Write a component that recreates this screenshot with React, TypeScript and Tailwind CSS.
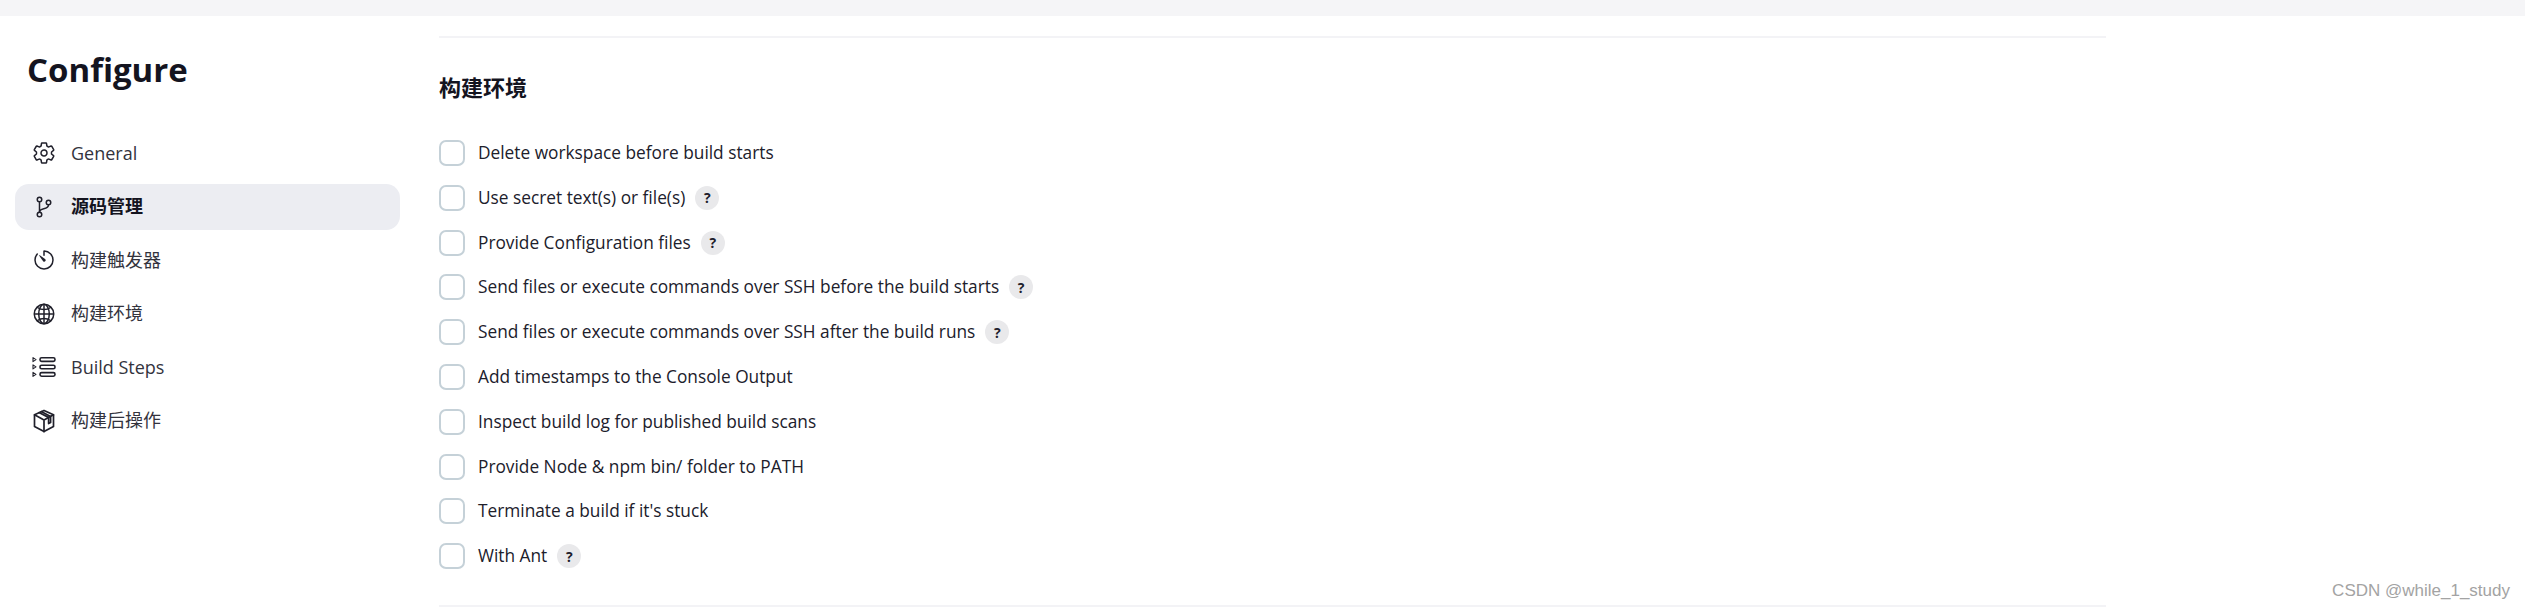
import React from 'react';
import { IoSettingsOutline, IoGitBranchOutline, IoTimerOutline, IoGlobeOutline } from 'react-icons/io5';

const font = { fontFamily: '"Open Sans", "Noto Sans CJK SC", sans-serif' };

const StepsIcon = () => (
	<svg width="24" height="24" viewBox="0 0 24 24" fill="none" stroke="currentColor" strokeWidth="1.6" strokeLinejoin="round">
		<rect x="8" y="2.8" width="15" height="3.6" rx="1.6" />
		<rect x="8" y="10.2" width="15" height="3.6" rx="1.6" />
		<rect x="8" y="17.6" width="15" height="3.6" rx="1.6" />
		<path d="M1 2.6l3 2-3 2zM1 9.9l3 2-3 2zM1 17.4l3 2-3 2z" strokeWidth="1.1" />
	</svg>
);

const BoxIcon = () => (
	<svg width="24" height="24" viewBox="0 0 24 24" fill="none" stroke="currentColor" strokeWidth="1.7" strokeLinejoin="round" strokeLinecap="round">
		<path d="M12 1.4l9.5 4.4v11.6L12 22.6 2.5 17.4V5.8z" />
		<path d="M2.5 5.8L12 11l9.5-5.2M12 11v11.6" />
		<path d="M7 3.6l9.6 5v6l2-1V7.4L9.2 2.6" />
	</svg>
);

const navItems = [
	{ label: 'General', icon: <IoSettingsOutline size={28} /> },
	{ label: '源码管理', icon: <IoGitBranchOutline size={28} />, active: true },
	{ label: '构建触发器', icon: <IoTimerOutline size={28} /> },
	{ label: '构建环境', icon: <IoGlobeOutline size={28} /> },
	{ label: 'Build Steps', icon: <StepsIcon /> },
	{ label: '构建后操作', icon: <BoxIcon /> },
];

const options = [
	{ label: 'Delete workspace before build starts' },
	{ label: 'Use secret text(s) or file(s)', help: true },
	{ label: 'Provide Configuration files', help: true },
	{ label: 'Send files or execute commands over SSH before the build starts', help: true },
	{ label: 'Send files or execute commands over SSH after the build runs', help: true },
	{ label: 'Add timestamps to the Console Output' },
	{ label: 'Inspect build log for published build scans' },
	{ label: 'Provide Node & npm bin/ folder to PATH' },
	{ label: "Terminate a build if it's stuck" },
	{ label: 'With Ant', help: true },
];

export default function App() {
	return <div className="relative h-[608px] w-[2525px] overflow-hidden bg-white text-[#14141f]" style={font}>
		<div className="h-4 bg-[#f5f5f7]" />
		<div className="flex">
			<aside className="w-[439px] shrink-0 pl-[15px] pr-[39px]">
				<h1 className="mt-[31px] pl-3 text-[33px] font-bold leading-[46px]">Configure</h1>
				<nav className="mt-[37px] flex flex-col gap-[7.6px]">
					{ navItems.map( item => (
						<a key={ item.label } className={ `flex h-[46px] items-center gap-[15px] rounded-[14px] pl-[17px] text-[18px] ${ item.active ? 'bg-[#ecedf2] font-bold' : 'text-[#33333d]' }` }>
							<span className="flex w-[24px] justify-center text-[#20202b]">{ item.icon }</span>
							{ item.label }
						</a>
					) ) }
				</nav>
			</aside>
			<main className="w-[1667px]">
				<div className="mt-[20px] h-[2px] bg-[#f3f3f6]" />
				<h2 className="mt-[34px] text-[22px] font-bold leading-[30px]">构建环境</h2>
				<div className="mt-[38px] flex flex-col gap-[18.8px]">
					{ options.map( option => (
						<div key={ option.label } className="flex h-[26px] items-center text-[17.3px] text-[#20202b]">
							<span className="mr-[13px] h-[26px] w-[26px] rounded-[7px] border-2 border-[#c5d1d8] bg-white" />
							<span className="whitespace-nowrap">{ option.label }</span>
							{ option.help && <span className="ml-[10px] flex h-6 w-6 items-center justify-center rounded-full bg-[#e9e9eb] text-[14px] font-bold">?</span> }
						</div>
					) ) }
				</div>
				<div className="mt-[36px] h-[2px] bg-[#f3f3f6]" />
			</main>
		</div>
		<div className="absolute right-[15px] top-[578px] text-[17px] text-[#a3a3a3]" style={{ fontFamily: '"Liberation Sans", sans-serif' }}>CSDN @while_1_study</div>
	</div>
}
